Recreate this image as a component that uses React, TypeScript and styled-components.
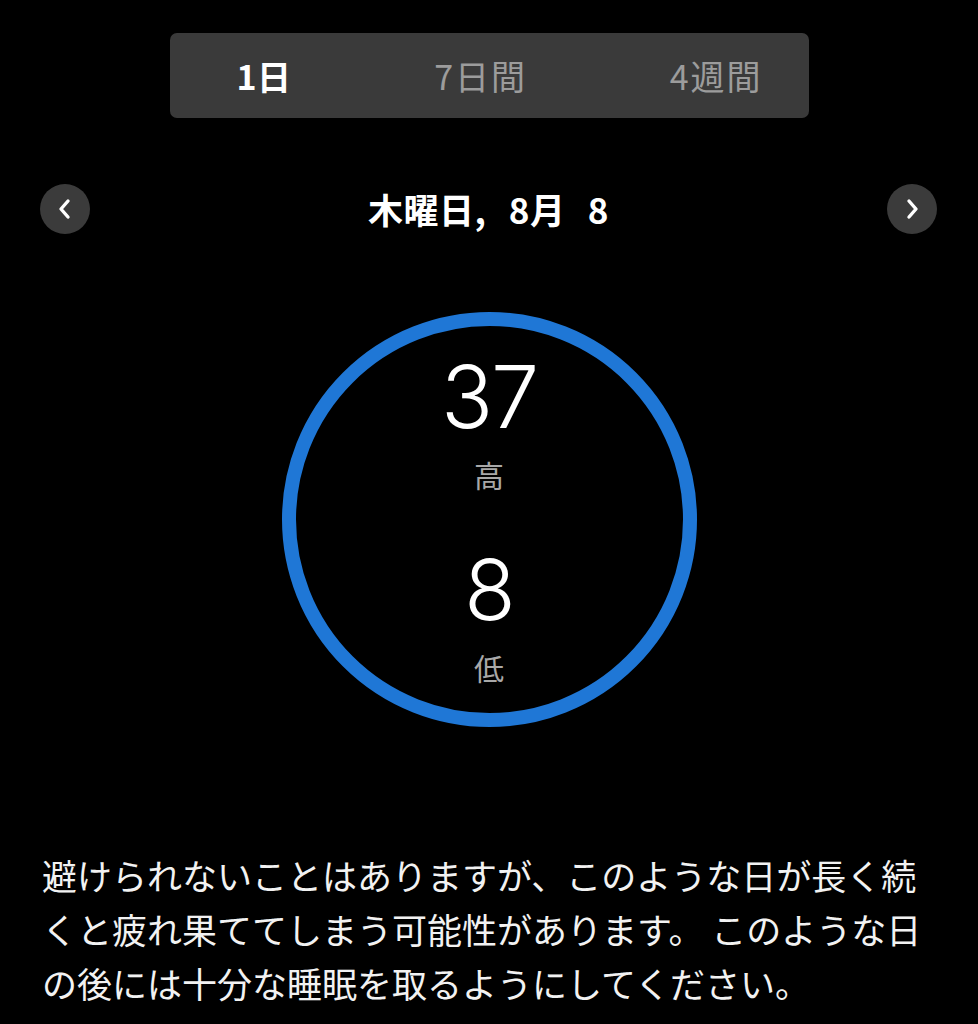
import React from 'react'
import styled, { createGlobalStyle } from 'styled-components'

const GlobalStyle = createGlobalStyle`
  html, body {
    margin: 0;
    padding: 0;
    background: #000;
  }
  body {
    font-family: "Noto Sans CJK JP", "Noto Sans", sans-serif;
    color: #fff;
  }
`

const tabs = ['1日', '7日間', '4週間']

const Chevron = ({ dir }: { dir: 'left' | 'right' }) => (
  <svg width="16" height="22" viewBox="0 0 16 22">
    <polyline
      points={dir === 'left' ? '11,3 4,11 11,19' : '5,3 12,11 5,19'}
      fill="none"
      stroke="#fff"
      strokeWidth="3.4"
      strokeLinecap="round"
      strokeLinejoin="round"
    />
  </svg>
)

const App = () => {
  return (
    <Page>
      <GlobalStyle />
      <SegmentBar>
        {tabs.map((t, i) => (
          <Segment key={t} active={i === 0}>
            {t}
          </Segment>
        ))}
      </SegmentBar>

      <NavRow>
        <NavButton aria-label="前の日">
          <Chevron dir="left" />
        </NavButton>
        <DateTitle>木曜日, 8月 8</DateTitle>
        <NavButton aria-label="次の日">
          <Chevron dir="right" />
        </NavButton>
      </NavRow>

      <Ring>
        <Value size={86}>37</Value>
        <Label gap={19}>高</Label>
        <Value size={84} gap={59}>8</Value>
        <Label gap={20}>低</Label>
      </Ring>

      <Message>
        避けられないことはありますが、このような日が長く続くと疲れ果ててしまう可能性があります。 このような日の後には十分な睡眠を取るようにしてください。
      </Message>
    </Page>
  )
}

export default App

const Page = styled.div`
  width: 978px;
  height: 1024px;
  overflow: hidden;
  background: #000;
  display: flex;
  flex-direction: column;
  align-items: center;
  padding-top: 33px;
  box-sizing: border-box;
`

const SegmentBar = styled.div`
  width: 639px;
  height: 85px;
  box-sizing: border-box;
  background: #3a3a3a;
  border-radius: 7px;
  display: flex;
  align-items: center;
  justify-content: space-between;
  padding: 0 46px 0 67px;
`

const Segment = styled.div<{ active?: boolean }>`
  font-size: 34px;
  line-height: 1;
  font-weight: ${p => (p.active ? 700 : 400)};
  color: ${p => (p.active ? '#ffffff' : '#9c9c9c')};
  letter-spacing: ${p => (p.active ? '0.5px' : '2px')};
`

const NavRow = styled.div`
  width: 100%;
  box-sizing: border-box;
  margin-top: 66px;
  padding: 0 41px 0 40px;
  display: grid;
  grid-template-columns: 50px 1fr 50px;
  align-items: center;
`

const NavButton = styled.button`
  width: 50px;
  height: 50px;
  border-radius: 50%;
  border: none;
  background: #3b3b3b;
  padding: 0;
  display: flex;
  align-items: center;
  justify-content: center;
  cursor: pointer;
`

const DateTitle = styled.div`
  text-align: center;
  font-size: 35px;
  font-weight: 700;
  line-height: 50px;
  word-spacing: 14px;
  letter-spacing: 0.5px;
  color: #fff;
`

const Ring = styled.div`
  margin-top: 78px;
  width: 415px;
  height: 415px;
  box-sizing: border-box;
  border: 14px solid #1f77d6;
  border-radius: 50%;
  display: flex;
  flex-direction: column;
  align-items: center;
  padding-top: 28px;
`

const Value = styled.div<{ size: number; gap?: number }>`
  font-family: Inter, "Noto Sans", sans-serif;
  font-size: ${p => p.size}px;
  line-height: ${p => p.size}px;
  margin-top: ${p => p.gap ?? 0}px;
  color: #fff;
  font-weight: 300;
  letter-spacing: -2px;
`

const Label = styled.div<{ gap: number }>`
  font-size: 30px;
  line-height: 30px;
  margin-top: ${p => p.gap}px;
  color: #a8a8a8;
`

const Message = styled.p`
  align-self: flex-start;
  margin: 121px 0 0 42px;
  width: 895px;
  font-size: 35px;
  line-height: 54px;
  color: #f2f2f2;
  line-break: strict;
`
